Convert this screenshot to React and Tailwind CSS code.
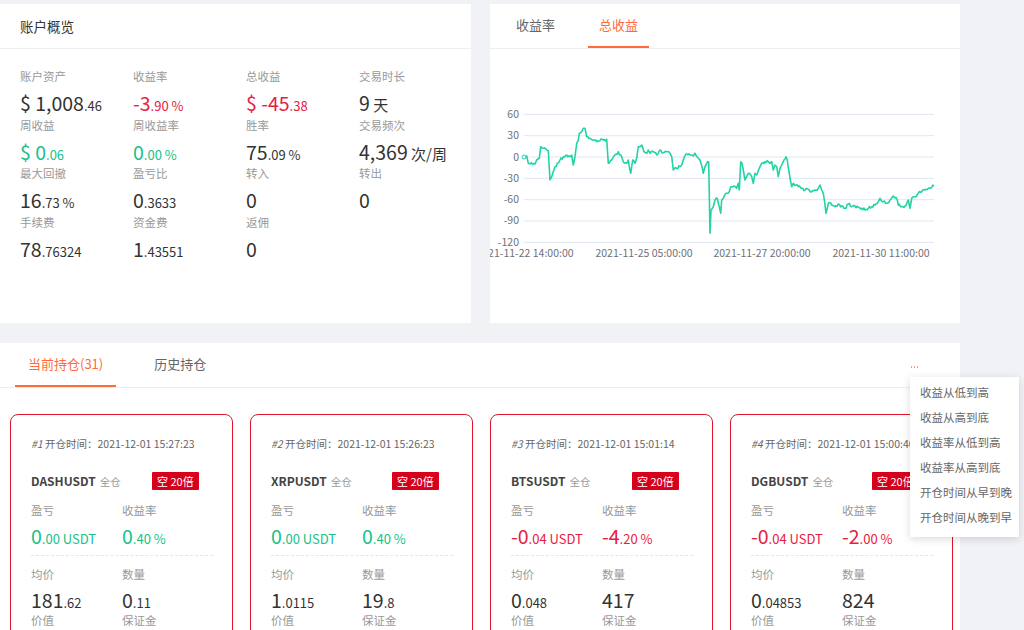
import { useMemo } from 'react'

const RED = 'text-[#e8203f]'
const GREEN = 'text-[#18c187]'

const overview = [
  { label: '账户资产', big: '$ 1,008', small: '.46' },
  { label: '收益率', big: '-3', small: '.90 %', color: RED },
  { label: '总收益', big: '$ -45', small: '.38', color: RED },
  { label: '交易时长', big: '9', unit: '天' },
  { label: '周收益', big: '$ 0', small: '.06', color: GREEN },
  { label: '周收益率', big: '0', small: '.00 %', color: GREEN },
  { label: '胜率', big: '75', small: '.09 %' },
  { label: '交易频次', big: '4,369', unit: '次/周' },
  { label: '最大回撤', big: '16', small: '.73 %' },
  { label: '盈亏比', big: '0', small: '.3633' },
  { label: '转入', big: '0' },
  { label: '转出', big: '0' },
  { label: '手续费', big: '78', small: '.76324' },
  { label: '资金费', big: '1', small: '.43551' },
  { label: '返佣', big: '0' },
]

const positions = [
  { no: 1, time: '2021-12-01 15:27:23', sym: 'DASHUSDT', pnl: ['0', '.00 USDT'], rate: ['0', '.40 %'], up: true, avg: ['181', '.62'], qty: ['0', '.11'] },
  { no: 2, time: '2021-12-01 15:26:23', sym: 'XRPUSDT', pnl: ['0', '.00 USDT'], rate: ['0', '.40 %'], up: true, avg: ['1', '.0115'], qty: ['19', '.8'] },
  { no: 3, time: '2021-12-01 15:01:14', sym: 'BTSUSDT', pnl: ['-0', '.04 USDT'], rate: ['-4', '.20 %'], up: false, avg: ['0', '.048'], qty: ['417', ''] },
  { no: 4, time: '2021-12-01 15:00:40', sym: 'DGBUSDT', pnl: ['-0', '.04 USDT'], rate: ['-2', '.00 %'], up: false, avg: ['0', '.04853'], qty: ['824', ''] },
]

const sortItems = ['收益从低到高', '收益从高到底', '收益率从低到高', '收益率从高到底', '开仓时间从早到晚', '开仓时间从晚到早']

// traced from the screenshot, in 3x crop coordinates
const trace = [
  [132,471],[140,468],[145,490],[150,492],[165,492],[170,480],[178,475],[182,440],[190,445],[205,452],[210,540],[215,530],[220,515],[225,500],[232,490],[240,480],[250,470],[260,465],[270,470],[275,465],[280,495],[285,470],[290,430],[295,420],[298,400],[305,395],[310,385],[315,385],[320,410],[330,415],[340,420],[350,425],[360,422],[370,420],[380,418],[385,490],[395,480],[405,465],[415,455],[425,470],[430,485],[440,490],[445,480],[452,520],[458,480],[465,490],[470,475],[475,440],[485,435],[492,455],[500,460],[505,450],[510,460],[520,455],[530,465],[540,450],[550,458],[560,455],[570,460],[575,470],[580,510],[590,505],[600,500],[605,495],[610,480],[620,462],[630,465],[640,468],[645,460],[650,470],[660,480],[670,520],[675,500],[680,490],[686,485],[690,700],[693,630],[700,620],[705,600],[712,595],[718,620],[722,640],[725,600],[730,595],[740,580],[748,575],[752,560],[760,560],[770,565],[775,550],[778,570],[782,485],[786,490],[790,510],[795,540],[800,530],[808,520],[815,530],[820,550],[825,520],[830,525],[840,500],[845,490],[855,485],[865,485],[870,490],[875,485],[880,510],[885,495],[890,500],[895,530],[900,505],[905,495],[912,480],[918,470],[922,480],[928,520],[935,560],[940,550],[948,555],[955,560],[965,565],[975,570],[985,568],[995,575],[1005,570],[1015,565],[1020,555],[1025,570],[1030,580],[1038,640],[1045,610],[1055,615],[1065,620],[1075,612],[1085,618],[1095,625],[1105,612],[1115,620],[1125,618],[1135,622],[1145,625],[1155,630],[1165,625],[1175,620],[1185,615],[1195,605],[1200,595],[1210,605],[1220,610],[1230,600],[1240,588],[1248,592],[1255,615],[1265,620],[1275,618],[1285,600],[1290,625],[1295,595],[1305,590],[1315,580],[1325,575],[1335,568],[1345,565],[1355,562],[1362,558],
]

function rnd(k) {
  const s = Math.sin(k * 12.9898) * 43758.5453
  return s - Math.floor(s)
}

function buildLine() {
  const p = trace.map(([x, y]) => [x / 3 - 10, y / 3 - 49])
  let d = `M${p[0][0].toFixed(1)},${p[0][1].toFixed(1)}`
  let k = 0
  for (let i = 1; i < p.length; i++) {
    const [x0, y0] = p[i - 1]
    const [x1, y1] = p[i]
    const steps = Math.max(1, Math.round((x1 - x0) / 1.3))
    for (let s = 1; s <= steps; s++) {
      const t = s / steps
      const jitter = s === steps ? 0 : (rnd(++k) - 0.5) * 3
      d += `L${(x0 + (x1 - x0) * t).toFixed(1)},${(y0 + (y1 - y0) * t + jitter).toFixed(1)}`
    }
  }
  return d
}

function Num({ big, small, unit, color = 'text-[#333]' }) {
  return (
    <div className={`h-[28px] leading-[28px] whitespace-nowrap ${color}`}>
      <span className="text-[19.5px]">{big}</span>
      {small && <span className="text-[13px]">{small}</span>}
      {unit && <span className="text-[15px]"> {unit}</span>}
    </div>
  )
}

function Chart() {
  const line = useMemo(buildLine, [])
  const ticks = [60, 30, 0, -30, -60, -90, -120]
  const xLabels = [
    [35, '2021-11-22 14:00:00'],
    [154, '2021-11-25 05:00:00'],
    [272, '2021-11-27 20:00:00'],
    [391, '2021-11-30 11:00:00'],
  ]
  return (
    <svg width="470" height="274" className="block">
      {ticks.map((v) => {
        const y = 108 - v * 0.711
        return (
          <g key={v}>
            <line x1="34" x2="444" y1={y} y2={y} stroke="#e0e6f1" strokeWidth="1" />
            <text x="29" y={y + 3.5} textAnchor="end" fontSize="10.5" fill="#6e7079">{v}</text>
          </g>
        )
      })}
      {xLabels.map(([x, t]) => (
        <text key={t} x={x} y="208" textAnchor="middle" fontSize="10.5" fill="#6e7079">{t}</text>
      ))}
      <path d={line} fill="none" stroke="#22d3a5" strokeWidth="1.6" strokeLinejoin="round" />
      <circle cx="34" cy="108" r="2" fill="#fff" stroke="#22d3a5" strokeWidth="1" />
    </svg>
  )
}

function Pair({ label, value, color, tail }) {
  return (
    <div>
      <div className="h-[16px] leading-[16px] text-[11.5px] text-[#999]">{label}</div>
      <div className={`mt-[6px] h-[24px] leading-[24px] whitespace-nowrap ${color}`}>
        <span className="text-[19.5px]">{value[0]}</span>
        <span className="text-[13px]">{value[1]}</span>
      </div>
      {tail && <div className="mt-[0px] h-[16px] leading-[16px] text-[11.5px] text-[#999]">{tail}</div>}
    </div>
  )
}

function PositionCard({ p }) {
  const c = p.up ? GREEN : RED
  return (
    <div className="w-[223px] h-[300px] shrink-0 rounded-[8px] border-[1.5px] border-[#e0142f] bg-white pl-[20px] pr-[19px] pt-[21px]">
      <div className="h-[16px] leading-[16px] text-[10.5px] text-[#666] whitespace-nowrap">
        <span className="italic">#{p.no}</span>&nbsp;开仓时间：{p.time}
      </div>
      <div className="mt-[20px] h-[18px] flex items-center">
        <div className="w-[121px] flex items-baseline gap-[4px]">
          <span className="text-[12px] font-bold text-[#444]">{p.sym}</span>
          <span className="text-[10.5px] text-[#999]">全仓</span>
        </div>
        <span className="h-[18px] leading-[18px] px-[5px] bg-[#d6001c] text-white text-[11px] rounded-[1px]">空 20倍</span>
      </div>
      <div className="mt-[12px] flex">
        <div className="w-[91px]">
          <Pair label="盈亏" value={p.pnl} color={c} />
        </div>
        <Pair label="收益率" value={p.rate} color={c} />
      </div>
      <div className="mt-[7px] border-t border-dashed border-[#e6e6e6]" />
      <div className="mt-[10px] flex">
        <div className="w-[91px]">
          <Pair label="均价" value={p.avg} color="text-[#333]" tail="价值" />
        </div>
        <Pair label="数量" value={p.qty} color="text-[#333]" tail="保证金" />
      </div>
    </div>
  )
}

export default function App() {
  return (
    <div className="relative w-[1024px] h-[630px] overflow-hidden bg-[#f0f2f5] pt-[4px] font-['Noto_Sans_CJK_SC','Noto_Sans',sans-serif]">
      <div className="flex gap-[19px]">
        <div className="w-[471px] h-[319px] bg-white">
          <div className="h-[45px] px-[20px] flex items-center border-b border-[#eeeeee] text-[13.5px] text-[#333]">账户概览</div>
          <div className="pt-[19px] pl-[20px] grid grid-cols-[113px_113px_113px_113px]">
            {overview.map((o) => (
              <div key={o.label} className="h-[48.7px]">
                <div className="h-[16px] leading-[16px] text-[11.5px] text-[#999]">{o.label}</div>
                <div className="mt-[5px]">
                  <Num big={o.big} small={o.small} unit={o.unit} color={o.color} />
                </div>
              </div>
            ))}
          </div>
        </div>
        <div className="w-[470px] h-[319px] bg-white overflow-hidden">
          <div className="h-[45px] flex items-end gap-[22px] pl-[15px] border-b border-[#eeeeee]">
            <div className="h-[44px] px-[11px] flex items-center text-[13px] text-[#666] border-b-2 border-transparent">收益率</div>
            <div className="h-[44px] px-[11px] flex items-center text-[13px] text-[#ff6a3a] border-b-2 border-[#ff6a3a]">总收益</div>
          </div>
          <Chart />
        </div>
      </div>

      <div className="mt-[20px] w-[960px] h-[300px] bg-white">
        <div className="h-[45px] flex items-end pl-[15px] pr-[42px] border-b border-[#eeeeee]">
          <div className="h-[44px] px-[13px] flex items-center text-[13px] text-[#ff6a3a] border-b-2 border-[#ff6a3a]">当前持仓(31)</div>
          <div className="ml-[25px] h-[44px] px-[13px] flex items-center text-[13px] text-[#666] border-b-2 border-transparent">历史持仓</div>
          <div className="ml-auto h-[44px] flex items-center gap-[1.5px] pt-[4px]">
            <span className="w-[1.5px] h-[1.5px] rounded-full bg-[#ff8a5c]" />
            <span className="w-[1.5px] h-[1.5px] rounded-full bg-[#ff8a5c]" />
            <span className="w-[1.5px] h-[1.5px] rounded-full bg-[#ff8a5c]" />
          </div>
        </div>
        <div className="pt-[26px] px-[10px] flex gap-[17px]">
          {positions.map((p) => (
            <PositionCard key={p.no} p={p} />
          ))}
        </div>
      </div>

      <div className="absolute left-[910px] top-[377px] w-[109px] bg-white shadow-[0_2px_8px_rgba(0,0,0,0.15)] pt-[3px] pb-[7px]">
        {sortItems.map((s) => (
          <div key={s} className="h-[25px] leading-[25px] pl-[10px] text-[11.5px] text-[#666] whitespace-nowrap">{s}</div>
        ))}
      </div>
    </div>
  )
}
